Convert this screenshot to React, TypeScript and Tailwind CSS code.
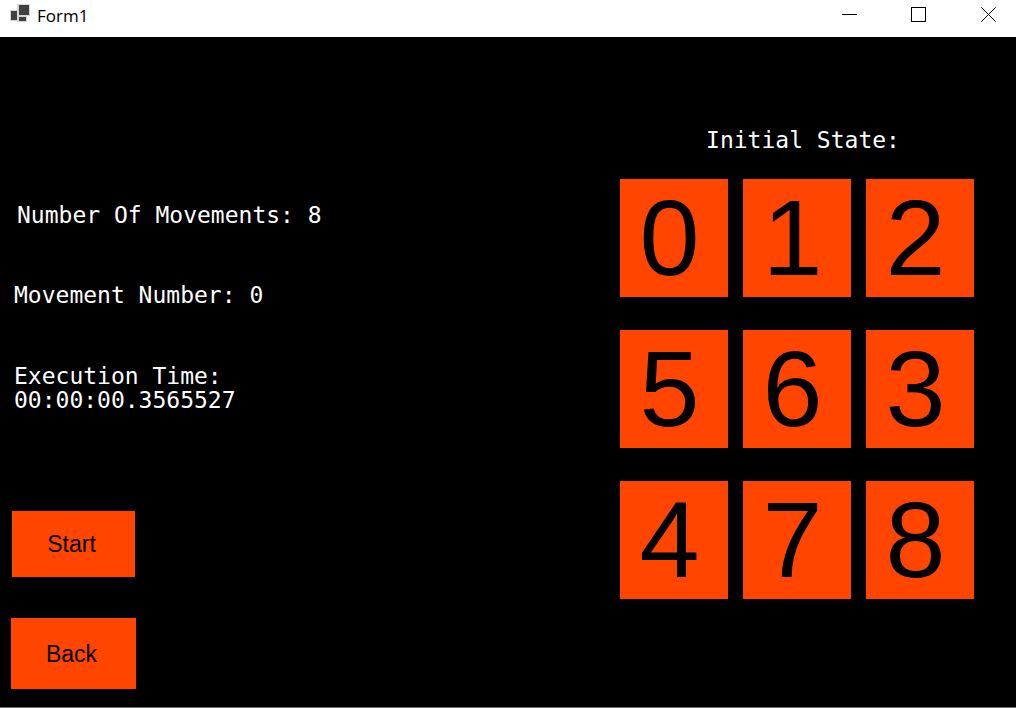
const tiles = [0, 1, 2, 5, 6, 3, 4, 7, 8];

function TitleBar() {
  return (
    <header className="flex h-[37px] shrink-0 items-start justify-between bg-white text-black">
      <div className="flex items-start pt-1 pl-[10px]">
        <svg width="20" height="20" viewBox="0 0 20 20" shapeRendering="crispEdges" aria-hidden="true">
          <rect x="7" y="0" width="13" height="12" fill="#d6d6d6" />
          <rect x="0" y="6" width="8" height="11" fill="#d6d6d6" />
          <rect x="7" y="12" width="10" height="6" fill="#d6d6d6" />
          <rect x="9" y="1" width="10" height="10" fill="#404040" />
          <rect x="1" y="7" width="6" height="9" fill="#404040" />
          <rect x="9" y="13" width="7" height="4" fill="#404040" />
        </svg>
        <h1 className="pl-[7px] font-['Open_Sans',sans-serif] text-[17px] leading-6">Form1</h1>
      </div>
      <div className="flex">
        <button type="button" aria-label="Minimize" className="flex h-[29px] w-[70px] items-center justify-center">
          <svg width="15" height="15" viewBox="0 0 15 15" stroke="#000" fill="none" aria-hidden="true">
            <path d="M0 7.5H15" />
          </svg>
        </button>
        <button type="button" aria-label="Maximize" className="flex h-[29px] w-[68px] items-center justify-center">
          <svg width="15" height="15" viewBox="0 0 15 15" stroke="#000" fill="none" aria-hidden="true">
            <rect x="0.5" y="0.5" width="14" height="14" />
          </svg>
        </button>
        <button type="button" aria-label="Close" className="flex h-[29px] w-[64px] items-center justify-end pr-5">
          <svg width="15" height="15" viewBox="0 0 15 15" stroke="#000" fill="none" aria-hidden="true">
            <path d="M0.3 0.3L14.7 14.7M14.7 0.3L0.3 14.7" />
          </svg>
        </button>
      </div>
    </header>
  );
}

export default function App() {
  return (
    <div className="flex min-h-screen flex-col border-b border-[#707070] bg-black text-white">
      <TitleBar />
      <main className="flex flex-1 items-start justify-between pr-[42px] font-['DejaVu_Sans_Mono',monospace] text-[23px] leading-6">
        <section className="flex flex-col items-start pt-[166px] pl-[11px]">
          <p className="pl-[6px]">Number Of Movements: 8</p>
          <p className="mt-14 pl-[3px]">Movement Number: 0</p>
          <p className="mt-[57px] pl-[3px]">
            Execution Time:
            <br />
            00:00:00.3565527
          </p>
          <button
            type="button"
            className="mt-[99px] ml-px h-[66px] w-[123px] bg-[#ff4500] pr-1 font-['Liberation_Sans',sans-serif] text-black"
          >
            Start
          </button>
          <button
            type="button"
            className="mt-[41px] h-[71px] w-[125px] bg-[#ff4500] pr-1 font-['Liberation_Sans',sans-serif] text-black"
          >
            Back
          </button>
        </section>
        <section className="flex flex-col items-center pt-[91px]">
          <h2 className="pl-[12px]">Initial State:</h2>
          <div className="mt-[27px] grid grid-cols-3 gap-x-[15px] gap-y-[33px]">
            {tiles.map((tile) => (
              <div
                key={tile}
                className="flex h-[118px] w-[108px] items-center justify-center bg-[#ff4500] pr-[9px] font-['Liberation_Sans',sans-serif] text-[108px] leading-none text-black"
              >
                {tile}
              </div>
            ))}
          </div>
        </section>
      </main>
    </div>
  );
}
